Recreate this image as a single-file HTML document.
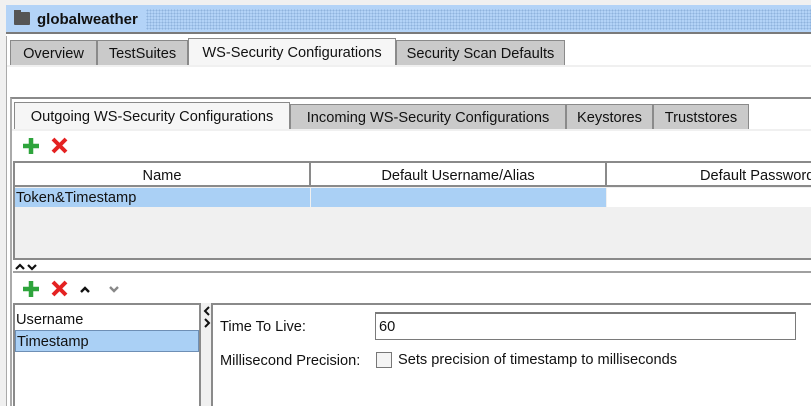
<!DOCTYPE html>
<html><head><style>
*{margin:0;padding:0;box-sizing:border-box}
body{width:811px;height:406px;overflow:hidden;background:#fff;font-family:"Liberation Sans",sans-serif;font-size:14.6px;color:#111;position:relative}
.a{position:absolute;white-space:nowrap}
.tab{position:absolute;background:#cacaca;border:1px solid #8a8a8a;border-bottom:none;text-align:center;line-height:26px;white-space:nowrap}
.tab.sel{background:#f6f6f6}
.hd{position:absolute;top:163px;height:24px;line-height:27px;text-align:center;background:#fff;border-right:2px solid #8a8a8a;border-bottom:2px solid #8a8a8a;white-space:nowrap;overflow:hidden}
</style></head><body>
<div class="a" style="left:0;top:0;width:811px;height:5px;background:#f0f0f0"></div>
<div class="a" style="left:0;top:5px;width:6px;height:401px;background:#f0f0f0"></div>
<div class="a" style="left:6px;top:5px;width:805px;height:29px;background:#b3d3f7;border-bottom:2px solid #7a7a7a"></div>
<div class="a" style="left:146px;top:9px;width:665px;height:21px;background-image:radial-gradient(#8fb3dd 0.8px,transparent 1px);background-size:3px 3px"></div>
<div class="a" style="left:14px;top:12px;width:16px;height:13px;background:#555;border-radius:1px"></div>
<div class="a" style="left:14px;top:10px;width:7px;height:4px;background:#555"></div>
<div class="a" style="left:37px;top:10px;font-weight:bold;font-size:15px;line-height:20px">globalweather</div>
<div class="a" style="left:6px;top:36px;width:1px;height:370px;background:#aaa"></div>
<div class="tab" style="left:10px;top:40px;width:87px;height:25px">Overview</div>
<div class="tab" style="left:97px;top:40px;width:91px;height:25px">TestSuites</div>
<div class="tab sel" style="left:188px;top:38px;width:208px;height:27px;line-height:29px">WS-Security Configurations</div>
<div class="tab" style="left:396px;top:40px;width:169px;height:25px">Security Scan Defaults</div>
<div class="a" style="left:7px;top:65px;width:804px;height:2px;background:#f0f0f0"></div>
<div class="a" style="left:10px;top:97px;width:801px;height:309px;border-top:2px solid #8a8a8a;border-left:2px solid #aaa;background:#fff"></div>
<div class="tab sel" style="left:14px;top:102px;width:276px;height:27px;line-height:29px">Outgoing WS-Security Configurations</div>
<div class="tab" style="left:290px;top:104px;width:276px;height:25px">Incoming WS-Security Configurations</div>
<div class="tab" style="left:566px;top:104px;width:87px;height:25px">Keystores</div>
<div class="tab" style="left:653px;top:104px;width:96px;height:25px">Truststores</div>
<div class="a" style="left:12px;top:129px;width:799px;height:2px;background:#f0f0f0"></div>
<svg class="a" style="left:20px;top:136px" width="52" height="20"><path d="M11 2v16M3 10h16" stroke="#2ea43c" stroke-width="4.5"/><path d="M33 3l13 13M46 3L33 16" stroke="#e42222" stroke-width="4"/></svg>
<div class="a" style="left:13px;top:161px;width:798px;height:99px;background:#f0f0f0;border:2px solid #8a8a8a;border-right:none"></div>
<div class="hd" style="left:15px;width:296px">Name</div>
<div class="hd" style="left:311px;width:296px">Default Username/Alias</div>
<div class="hd" style="left:607px;width:204px;border-right:none;text-align:left;padding-left:93px">Default Password</div>
<div class="a" style="left:15px;top:188px;width:295px;height:19px;background:#aad0f5;line-height:21px;padding-left:1px">Token&amp;Timestamp</div>
<div class="a" style="left:311px;top:188px;width:295px;height:19px;background:#aad0f5"></div>
<div class="a" style="left:607px;top:188px;width:204px;height:19px;background:#fff"></div>
<svg class="a" style="left:15px;top:262px" width="26" height="10"><path d="M1 7l4-4 4 4M13 3l4 4 4-4" stroke="#111" stroke-width="2.2" fill="none"/></svg>
<div class="a" style="left:13px;top:271px;width:798px;height:2px;background:#a0a0a0"></div>
<svg class="a" style="left:20px;top:279px" width="105" height="20"><path d="M11 2v16M3 10h16" stroke="#2ea43c" stroke-width="4.5"/><path d="M33 3l13 13M46 3L33 16" stroke="#e42222" stroke-width="4"/><path d="M61 13l4-4 4 4" stroke="#111" stroke-width="2.4" fill="none"/><path d="M90 8l4 4 4-4" stroke="#888" stroke-width="2.4" fill="none"/></svg>
<div class="a" style="left:13px;top:303px;width:188px;height:103px;border:2px solid #8a8a8a;border-bottom:none;background:#fff"></div>
<div class="a" style="left:16px;top:311px;line-height:19px">Username</div>
<div class="a" style="left:15px;top:330px;width:184px;height:22px;background:#aad0f5;border:1px solid #6e8fb5;line-height:22px;padding-left:1px">Timestamp</div>
<div class="a" style="left:201px;top:303px;width:11px;height:103px;background:#f0f0f0"></div>
<svg class="a" style="left:202px;top:305px" width="10" height="24"><path d="M7 2l-4 4 4 4M3 14l4 4-4 4" stroke="#111" stroke-width="2" fill="none"/></svg>
<div class="a" style="left:211px;top:303px;width:600px;height:103px;border-top:2px solid #8a8a8a;border-left:2px solid #8a8a8a;background:#fff"></div>
<div class="a" style="left:220px;top:318px;line-height:19px">Time To Live:</div>
<div class="a" style="left:375px;top:312px;width:421px;height:28px;border:1px solid #7a7a7a;border-top-width:2px;line-height:27px;padding-left:3px">60</div>
<div class="a" style="left:220px;top:352px;line-height:19px">Millisecond Precision:</div>
<div class="a" style="left:376px;top:352px;width:16px;height:16px;border:1px solid #777;background:#f4f4f4"></div>
<div class="a" style="left:398px;top:351px;line-height:19px">Sets precision of timestamp to milliseconds</div>
</body></html>
